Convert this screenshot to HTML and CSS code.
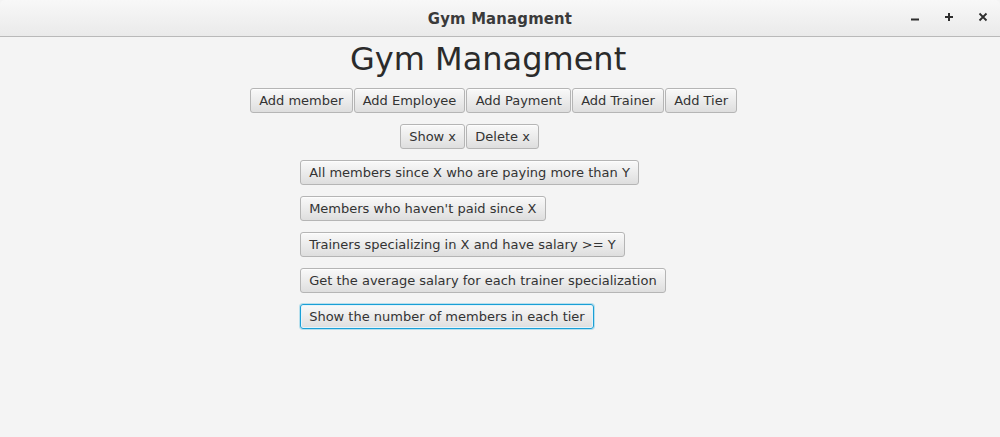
FILE: index.html
```html
<!DOCTYPE html>
<html>
<head>
<meta charset="utf-8">
<link rel="stylesheet" href="styles.css">
</head>
<body>
<div class="window">
  <header class="titlebar">
    <span class="title">Gym Managment</span>
    <div class="controls">
      <span class="ctl"><svg width="10" height="10" viewBox="0 0 10 10"><rect x="1" y="6.5" width="8" height="2" fill="#2e2e2e"/></svg></span>
      <span class="ctl"><svg width="10" height="10" viewBox="0 0 10 10"><rect x="1" y="4" width="8" height="2" fill="#2e2e2e"/><rect x="4" y="1" width="2" height="8" fill="#2e2e2e"/></svg></span>
      <span class="ctl"><svg width="10" height="10" viewBox="0 0 10 10"><path d="M1.5 1.5 L8.5 8.5 M8.5 1.5 L1.5 8.5" stroke="#2e2e2e" stroke-width="1.8"/></svg></span>
    </div>
  </header>
  <main class="content">
    <h1 class="heading">Gym Managment</h1>
    <div class="row row-add">
      <button class="btn">Add member</button>
      <button class="btn">Add Employee</button>
      <button class="btn">Add Payment</button>
      <button class="btn">Add Trainer</button>
      <button class="btn">Add Tier</button>
    </div>
    <div class="row row-show">
      <button class="btn">Show x</button>
      <button class="btn">Delete x</button>
    </div>
    <div class="queries">
      <button class="btn">All members since X who are paying more than Y</button>
      <button class="btn">Members who haven't paid since X</button>
      <button class="btn">Trainers specializing in X and have salary &gt;= Y</button>
      <button class="btn">Get the average salary for each trainer specialization</button>
      <button class="btn focused">Show the number of members in each tier</button>
    </div>
  </main>
</div>
</body>
</html>
```

FILE: styles.css
```css
* { box-sizing: border-box; }
html, body {
  margin: 0;
  padding: 0;
  width: 1000px;
  height: 437px;
  overflow: hidden;
  background: #f4f4f4;
}
.window {
  width: 1000px;
  height: 437px;
  display: flex;
  flex-direction: column;
  background: #f4f4f4;
}
.titlebar {
  height: 37px;
  flex: none;
  display: flex;
  align-items: center;
  justify-content: center;
  background: linear-gradient(to bottom, #f8f8f8, #eaeaea);
  border-bottom: 1px solid #b9b9b9;
  border-radius: 5px 5px 0 0;
  position: relative;
}
.title {
  font-family: "DejaVu Sans Condensed", "DejaVu Sans", sans-serif;
  font-weight: bold;
  font-size: 16.5px;
  color: #3a3a3a;
  letter-spacing: 0.2px;
}
.controls {
  position: absolute;
  right: 12px;
  top: 12px;
  display: flex;
  gap: 24px;
}
.ctl {
  width: 10px;
  height: 10px;
  display: block;
}
.ctl svg { display: block; }
.content {
  flex: 1;
  display: flex;
  flex-direction: column;
  font-family: "DejaVu Sans", sans-serif;
}
.heading {
  margin: 3px 0 0 0;
  padding-left: 350px;
  font-family: "DejaVu Sans", sans-serif;
  font-weight: normal;
  font-size: 32px;
  line-height: 38px;
  color: #2b2b2b;
}
.row {
  display: flex;
  gap: 1px;
}
.row-add { margin-top: 10px; padding-left: 250px; }
.row-show { margin-top: 11px; padding-left: 400px; }
.queries {
  margin-top: 11px;
  padding-left: 300px;
  display: flex;
  flex-direction: column;
  align-items: flex-start;
  gap: 11px;
}
.btn {
  font-family: "DejaVu Sans", sans-serif;
  font-size: 13px;
  line-height: 15px;
  height: 25px;
  padding: 4px 8.15px;
  margin: 0;
  color: #333333;
  background: linear-gradient(to bottom, #f9f9f9 0%, #e9e9e9 60%, #dedede 100%);
  border: 1px solid #b5b5b5;
  border-radius: 3px;
  box-shadow: inset 0 1px 0 #fdfdfd;
  white-space: nowrap;
}
.btn.focused {
  border-color: #1a9fd6;
  box-shadow: 0 0 0 1px rgba(3, 158, 211, 0.25), inset 0 0 0 1px #e4f3fa;
}
```
